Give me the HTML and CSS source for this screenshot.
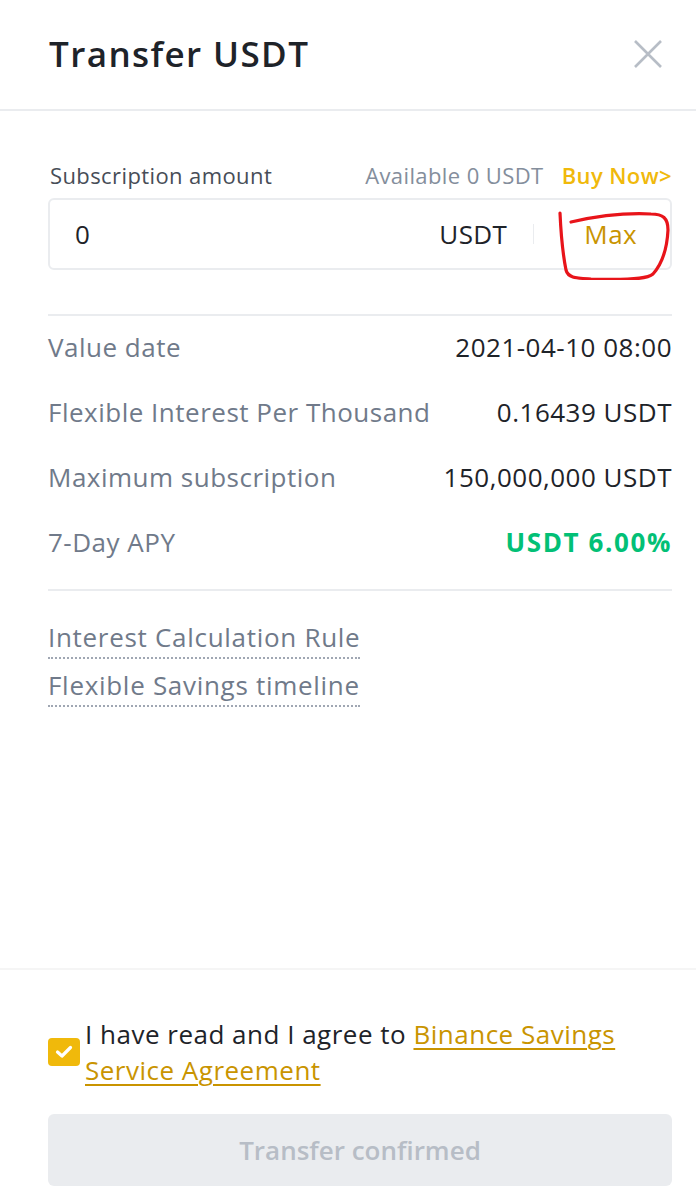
FILE: index.html
```html
<!DOCTYPE html>
<html lang="en">
<head>
<meta charset="utf-8">
<title>Transfer USDT</title>
<link rel="stylesheet" href="styles.css">
</head>
<body>
<div class="sheet">
  <header class="head">
    <h1 class="title">Transfer USDT</h1>
    <svg class="close" width="30" height="30" viewBox="0 0 30 30"><path d="M2 2 L28 28 M28 2 L2 28" stroke="#b7bdc6" stroke-width="2.6" fill="none"/></svg>
  </header>

  <main class="body">
    <div class="amount-top">
      <span class="amount-label">Subscription amount</span>
      <span class="avail">Available 0 USDT <span class="buy">Buy Now&gt;</span></span>
    </div>
    <div class="input">
      <span class="input-val">0</span>
      <span class="input-unit">USDT</span>
      <span class="input-sep"></span>
      <span class="input-max">Max</span>
      <svg class="scribble" width="120" height="80" viewBox="0 0 120 80"><path d="M9 13 C10 35 12 55 15 70 C17 78 25 78 40 79 C70 80 95 80 102 74 C110 65 116 50 117 30 C117 18 112 14 100 14 C80 13 55 14 20 22" stroke="#e8141a" stroke-width="3.2" fill="none" stroke-linecap="round" stroke-linejoin="round"/></svg>
    </div>

    <div class="rows">
      <div class="row"><span class="k">Value date</span><span class="v">2021-04-10 08:00</span></div>
      <div class="row"><span class="k">Flexible Interest Per Thousand</span><span class="v">0.16439 USDT</span></div>
      <div class="row"><span class="k">Maximum subscription</span><span class="v">150,000,000 USDT</span></div>
      <div class="row"><span class="k">7-Day APY</span><span class="v green">USDT 6.00%</span></div>
    </div>

    <div class="links">
      <span class="dlink">Interest Calculation Rule</span>
      <span class="dlink">Flexible Savings timeline</span>
    </div>
  </main>

  <footer class="foot">
    <div class="agree">
      <span class="check"><svg width="20" height="16" viewBox="0 0 20 16"><path d="M3.5 8 L8 12 L16.5 3.5" stroke="#fff" stroke-width="3.2" fill="none" stroke-linecap="round" stroke-linejoin="round"/></svg></span>
      <p class="agree-text">I have read and I agree to <span class="alink">Binance Savings</span> <span class="alink">Service Agreement</span></p>
    </div>
    <button class="btn">Transfer confirmed</button>
  </footer>
</div>
</body>
</html>
```

FILE: styles.css
```css
* { box-sizing: border-box; }
html, body { margin: 0; padding: 0; background: #fff; }
body { font-family: "Open Sans", "Noto Sans", sans-serif; color: #1e2329; }
.sheet { width: 696px; height: 1200px; display: flex; flex-direction: column; }
.head { height: 111px; display: flex; align-items: center; justify-content: space-between; padding: 0 33px 2px 49px; border-bottom: 2px solid #eaecef; }
.title { margin: 0; font-size: 35px; font-weight: 600; letter-spacing: 1.4px; color: #1e2329; }
.close { display: block; }
.body { flex: 1; padding: 48px 24px 0 48px; }
.amount-top { display: flex; justify-content: space-between; align-items: center; padding-left: 2px; height: 32px; font-size: 22px; letter-spacing: 0.4px; }
.amount-label { color: #474d57; }
.avail { color: #848e9c; }
.buy { color: #f0b90b; font-weight: 600; margin-left: 12px; }
.input { position: relative; margin-top: 7px; height: 72px; border: 2px solid #eaecef; border-radius: 6px; display: flex; align-items: center; padding: 0 0 0 25px; font-size: 26px; letter-spacing: 0.4px; }
.input-val { flex: 1; color: #1e2329; }
.input-unit { color: #1e2329; }
.input-sep { width: 1px; height: 20px; background: #eaecef; margin: 0 50px 0 26px; }
.input-max { color: #c99400; margin-right: 33px; }
.scribble { position: absolute; left: 501px; top: 0px; }
.rows { margin-top: 44px; border-top: 2px solid #eaecef; border-bottom: 2px solid #eaecef; padding: 0 0 13px; }
.row { height: 65px; padding-bottom: 4px; display: flex; justify-content: space-between; align-items: center; font-size: 26px; letter-spacing: 0.5px; }
.k { color: #707a8a; }
.v { color: #1e2329; }
.green { color: #02c076; font-weight: 700; letter-spacing: 1.6px; }
.links { padding-top: 28px; display: flex; flex-direction: column; align-items: flex-start; gap: 8px; font-size: 26px; letter-spacing: 0.7px; color: #707a8a; }
.dlink { border-bottom: 2px dotted #a0a7b3; line-height: 36px; padding-bottom: 2px; }
.foot { border-top: 2px solid #f5f5f5; padding: 46px 24px 14px 48px; }
.agree { display: flex; align-items: center; gap: 5px; }
.check { width: 32px; height: 28px; flex: none; background: #f0b90b; border-radius: 4px; display: flex; align-items: center; justify-content: center; }
.agree-text { margin: 0; font-size: 26px; letter-spacing: 0.5px; line-height: 36px; color: #1e2329; }
.alink { color: #c99400; text-decoration: underline; text-decoration-thickness: 2px; text-underline-offset: 4px; }
.btn { margin-top: 26px; width: 100%; height: 72px; border: 0; border-radius: 6px; background: #eaecef; color: #b7bdc6; font-family: inherit; font-size: 26px; font-weight: 600; }
```
